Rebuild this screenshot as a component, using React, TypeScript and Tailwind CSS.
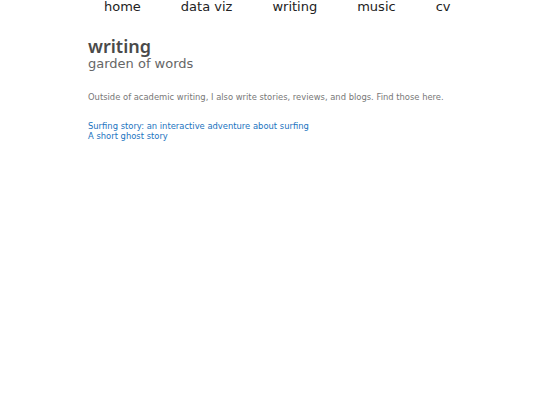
export default function App() {
  const navItems = ["home", "data viz", "writing", "music", "cv"];

  return (
    <div className="min-h-screen w-full bg-white text-[#555]" style={{ fontFamily: '"DejaVu Sans", sans-serif' }}>
      <nav className="flex gap-[40px] pl-[104px] text-[13px] leading-[14px] text-[#222]">
        {navItems.map((item) => (
          <a key={item} href="#" className="font-normal">
            {item}
          </a>
        ))}
      </nav>

      <main className="pl-[88px] pt-[22px]">
        <h1
          className="text-[18px] leading-[20px] font-semibold text-[#4a4a4a]"
          style={{ fontFamily: '"Noto Sans", sans-serif' }}
        >
          writing
        </h1>
        <h2 className="text-[13px] leading-[16px] text-[#666]">garden of words</h2>

        <p className="mt-[19px] text-[8.4px] leading-[12px] text-[#777]">
          Outside of academic writing, I also write stories, reviews, and blogs. Find those here.
        </p>

        <div className="mt-[18px] flex flex-col text-[8.4px] leading-[10px] font-medium text-[#1a73c0]">
          <a href="#">Surfing story: an interactive adventure about surfing</a>
          <a href="#">A short ghost story</a>
        </div>
      </main>
    </div>
  );
}
